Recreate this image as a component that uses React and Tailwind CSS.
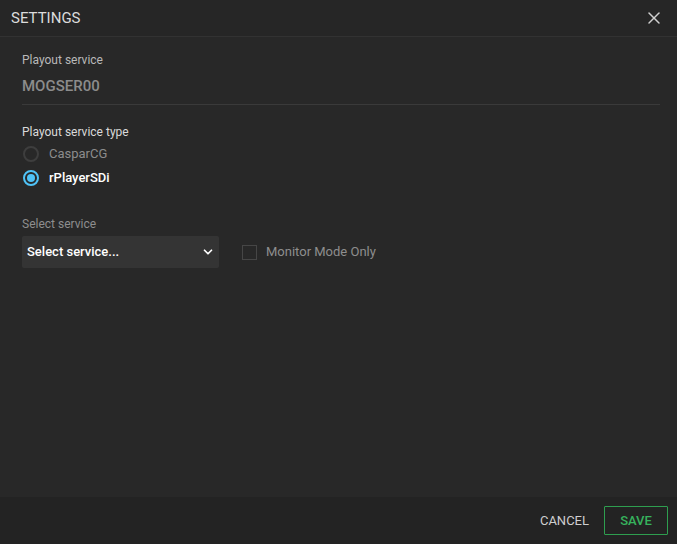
import { ChevronDown, X } from 'lucide-react';

export default function App() {
  return (
    <div className="flex h-[544px] w-[677px] flex-col bg-[#282828] text-[13px] text-[#ddd]" style={{ fontFamily: 'Roboto, "Liberation Sans", sans-serif' }}>
      <header className="flex h-[37px] shrink-0 items-center justify-between border-b border-[#323232] bg-[#262626] pl-[11px] pr-[13px]">
        <h1 className="text-[15px] font-normal text-[#dcdcdc]">SETTINGS</h1>
        <button className="text-[#cfcfcf]"><X size={20} strokeWidth={1.8} /></button>
      </header>
      <main className="flex-1 pl-[22px] pr-[17px] pt-[16px]">
        <label className="block text-[12px] leading-[15px] text-[#b9b9b9]">Playout service</label>
        <div className="mt-[8px] border-b border-[#3a3a3a] pb-[8px] text-[15px] font-medium leading-[20px] text-[#8c8c8c]">MOGSER00</div>
        <p className="mt-[20px] text-[12px] leading-[15px] text-[#dadada]">Playout service type</p>
        <div className="mt-[5px] space-y-[6px]">
          <Radio label="CasparCG" />
          <Radio label="rPlayerSDi" checked />
        </div>
        <label className="mt-[30px] block text-[12px] leading-[15px] text-[#8e8e8e]">Select service</label>
        <div className="mt-[4px] flex items-center gap-[23px]">
          <div className="flex h-[32px] w-[197px] items-center justify-between rounded-[2px] bg-[#343434] pl-[5px] pr-[4px]">
            <span className="text-[13px] font-medium text-white">Select service...</span>
            <ChevronDown size={14} strokeWidth={3} className="text-white" />
          </div>
          <div className="flex items-center gap-[9px]">
            <span className="h-[15px] w-[15px] border border-[#464646]" />
            <span className="text-[13px] text-[#8e8e8e]">Monitor Mode Only</span>
          </div>
        </div>
      </main>
      <footer className="flex h-[47px] shrink-0 items-center justify-end gap-[15px] bg-[#232323] pr-[9px]">
        <button className="text-[13px] text-[#cfcfcf]">CANCEL</button>
        <button className="h-[29px] w-[64px] rounded-[1px] border border-[#2e9e4f] text-[13px] font-medium text-[#36b25d]">SAVE</button>
      </footer>
    </div>
  );
}

function Radio({ label, checked }) {
  return (
    <div className="flex h-[18px] items-center gap-[10px] pl-[1px]">
      <span className={`flex h-[16px] w-[16px] items-center justify-center rounded-full border-2 ${checked ? 'border-[#4fc3f7]' : 'border-[#3e3e3e]'}`}>
        {checked && <span className="h-[8px] w-[8px] rounded-full bg-[#4fc3f7]" />}
      </span>
      <span className={checked ? 'font-medium text-white' : 'text-[#8c8c8c]'}>{label}</span>
    </div>
  );
}
